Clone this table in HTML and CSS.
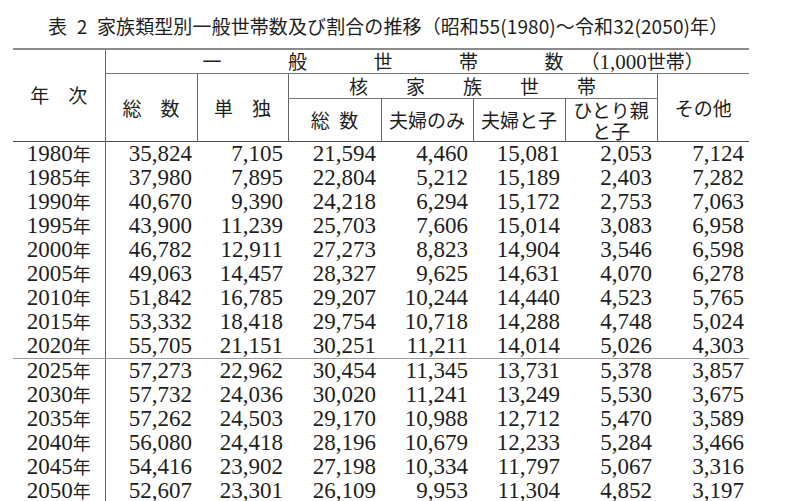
FILE: index.html
```html
<!DOCTYPE html>
<html lang="ja">
<head>
<meta charset="utf-8">
<title>表2 家族類型別一般世帯数</title>
<link rel="stylesheet" href="styles.css">
</head>
<body>
<div class="page">
  <h1 class="title">表&ensp;2&ensp;家族類型別一般世帯数及び割合の推移（昭和55(1980)～令和32(2050)年）</h1>
  <table class="stats">
    <colgroup>
      <col class="c1"><col class="c2"><col class="c3"><col class="c4"><col class="c5"><col class="c6"><col class="c7"><col class="c8">
    </colgroup>
    <thead>
      <tr class="r1">
        <th rowspan="3" class="year-h">年　次</th>
        <th colspan="7" class="band"><div class="band-in"><span class="spread">一般世帯</span><span>数</span><span class="unit">（<span class="num">1,000</span>世帯）</span></div></th>
      </tr>
      <tr class="r2">
        <th rowspan="2" class="tall">総　数</th>
        <th rowspan="2" class="tall">単　独</th>
        <th colspan="4" class="nuc">核　　家　　族　　世　　帯</th>
        <th rowspan="2" class="tall">その他</th>
      </tr>
      <tr class="r3">
        <th>総&ensp;数</th>
        <th>夫婦のみ</th>
        <th>夫婦と子</th>
        <th class="two">ひとり親<br>と子</th>
      </tr>
    </thead>
    <tbody>
      <tr><td class="yr">1980<span>年</span></td><td>35,824</td><td>7,105</td><td>21,594</td><td>4,460</td><td>15,081</td><td>2,053</td><td>7,124</td></tr>
      <tr><td class="yr">1985<span>年</span></td><td>37,980</td><td>7,895</td><td>22,804</td><td>5,212</td><td>15,189</td><td>2,403</td><td>7,282</td></tr>
      <tr><td class="yr">1990<span>年</span></td><td>40,670</td><td>9,390</td><td>24,218</td><td>6,294</td><td>15,172</td><td>2,753</td><td>7,063</td></tr>
      <tr><td class="yr">1995<span>年</span></td><td>43,900</td><td>11,239</td><td>25,703</td><td>7,606</td><td>15,014</td><td>3,083</td><td>6,958</td></tr>
      <tr><td class="yr">2000<span>年</span></td><td>46,782</td><td>12,911</td><td>27,273</td><td>8,823</td><td>14,904</td><td>3,546</td><td>6,598</td></tr>
      <tr><td class="yr">2005<span>年</span></td><td>49,063</td><td>14,457</td><td>28,327</td><td>9,625</td><td>14,631</td><td>4,070</td><td>6,278</td></tr>
      <tr><td class="yr">2010<span>年</span></td><td>51,842</td><td>16,785</td><td>29,207</td><td>10,244</td><td>14,440</td><td>4,523</td><td>5,765</td></tr>
      <tr><td class="yr">2015<span>年</span></td><td>53,332</td><td>18,418</td><td>29,754</td><td>10,718</td><td>14,288</td><td>4,748</td><td>5,024</td></tr>
      <tr class="sep"><td class="yr">2020<span>年</span></td><td>55,705</td><td>21,151</td><td>30,251</td><td>11,211</td><td>14,014</td><td>5,026</td><td>4,303</td></tr>
      <tr><td class="yr">2025<span>年</span></td><td>57,273</td><td>22,962</td><td>30,454</td><td>11,345</td><td>13,731</td><td>5,378</td><td>3,857</td></tr>
      <tr><td class="yr">2030<span>年</span></td><td>57,732</td><td>24,036</td><td>30,020</td><td>11,241</td><td>13,249</td><td>5,530</td><td>3,675</td></tr>
      <tr><td class="yr">2035<span>年</span></td><td>57,262</td><td>24,503</td><td>29,170</td><td>10,988</td><td>12,712</td><td>5,470</td><td>3,589</td></tr>
      <tr><td class="yr">2040<span>年</span></td><td>56,080</td><td>24,418</td><td>28,196</td><td>10,679</td><td>12,233</td><td>5,284</td><td>3,466</td></tr>
      <tr><td class="yr">2045<span>年</span></td><td>54,416</td><td>23,902</td><td>27,198</td><td>10,334</td><td>11,797</td><td>5,067</td><td>3,316</td></tr>
      <tr><td class="yr">2050<span>年</span></td><td>52,607</td><td>23,301</td><td>26,109</td><td>9,953</td><td>11,304</td><td>4,852</td><td>3,197</td></tr>
    </tbody>
  </table>
</div>
</body>
</html>
```

FILE: styles.css
```css
html, body {
  margin: 0;
  padding: 0;
  background: #ffffff;
}

body {
  color: #1e1e1e;
}

.page {
  padding: 14px 0 0 13px;
  width: 736px;
}

.title {
  margin: 0 0 10px 35px;
  font: 400 19px/24px "Noto Sans CJK JP", sans-serif;
  letter-spacing: 0.1px;
  white-space: nowrap;
}

.stats {
  border-collapse: collapse;
  table-layout: fixed;
  width: 736px;
  border-top: 2px solid #8c8c8c;
  font-family: "Liberation Serif", "Noto Sans CJK JP", serif;
}

.c1, .c2, .c5, .c6, .c7, .c8 { width: 92px; }
.c3 { width: 91px; }
.c4 { width: 93px; }

thead {
  border-bottom: 1px solid #4a4a4a;
}

th {
  font-weight: 400;
  font-size: 19px;
  line-height: 22px;
  padding: 0;
  text-align: center;
  white-space: nowrap;
  font-family: "Noto Sans CJK JP", sans-serif;
}

.year-h {
  border-right: 1px solid #666;
  padding-bottom: 2px;
}

.r1 th.band {
  height: 23px;
  border-bottom: 1px solid #777;
  text-align: left;
}

.band-in {
  display: flex;
  align-items: baseline;
  padding-left: 97px;
}

.spread {
  letter-spacing: 66.5px;
}

.unit {
  margin-left: 17px;
}

.num {
  font-family: "Liberation Serif", serif;
  font-size: 21px;
  line-height: 1;
}

.r2 th {
  height: 24px;
  border-left: 1px solid #666;
}

.nuc {
  border-bottom: 1px solid #777;
}

.r3 th {
  height: 42px;
  border-left: 1px solid #666;
}

.r3 th.two {
  line-height: 21px;
  vertical-align: top;
}

tbody td {
  font-size: 23px;
  line-height: 24px;
  height: 24px;
  padding: 0 5px 0 0;
  text-align: right;
  white-space: nowrap;
}

tbody td.yr {
  text-align: center;
  padding-right: 0;
  border-right: 1px solid #666;
}

.yr span {
  font-size: 18px;
  line-height: 1;
  font-family: "Noto Sans CJK JP", sans-serif;
}

tr.sep td {
  border-bottom: 1px solid #9a9a9a;
}
```
